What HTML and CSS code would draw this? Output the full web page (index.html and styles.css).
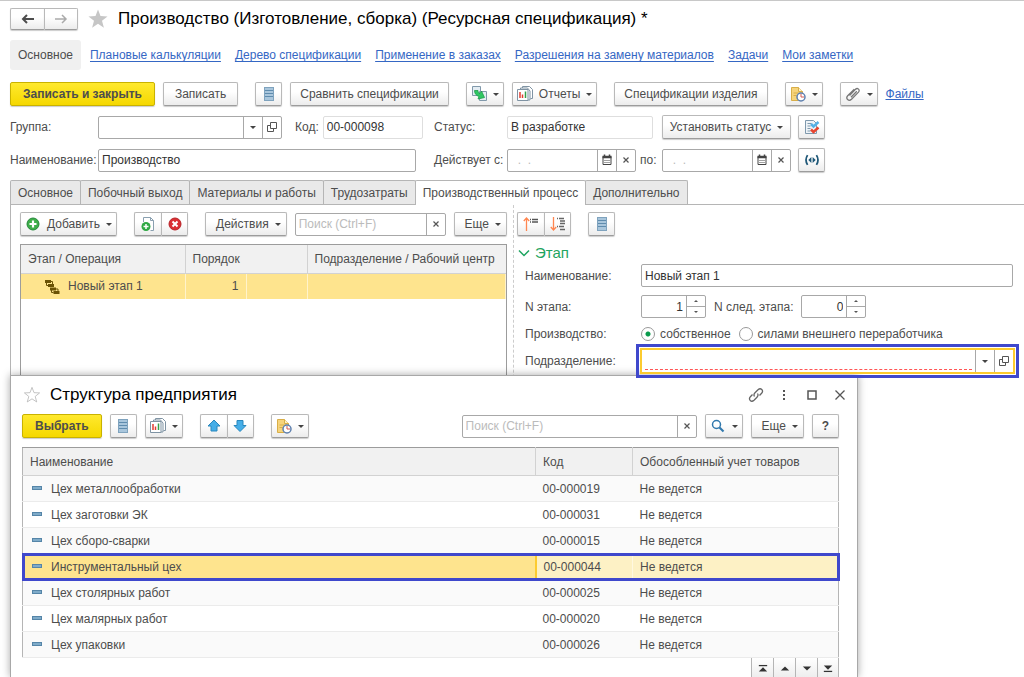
FILE: index.html
```html
<!DOCTYPE html>
<html lang="ru">
<head>
    <meta charset="UTF-8">
    <meta name="viewport" content="width=device-width, initial-scale=1.0">
    <link rel="stylesheet" href="styles.css">
    <title>Производство (Ресурсная спецификация)</title>
</head>
<body>
    <svg class="sprite" aria-hidden="true">
        <symbol id="i-list" viewBox="0 0 16 16">
            <rect x="3.5" y="1.5" width="9" height="13" fill="#a9c6dc" stroke="#7fa3be"/>
            <path d="M4 4.500h8M4 7.500h8M4 10.500h8" stroke="#5f8cae"/>
        </symbol>
        <symbol id="i-report" viewBox="0 0 16 16">
            <path d="M5.500 2.500V.5h7l3 3v9h-2" fill="#fff" stroke="#7f93a3"/>
            <path d="M3.500 3V2h7l2.500 3v9h-2" fill="#fff" stroke="#7f93a3"/>
            <path d="M.5 3.500h10.500v11H.5z" fill="#fff" stroke="#7f93a3"/>
            <path d="M3 6v6" stroke="#e23c32" stroke-width="1.500"/>
            <path d="M5.500 8.500V12" stroke="#e23c32" stroke-width="1.500"/>
            <path d="M8.500 5.500V12" stroke="#35a04a" stroke-width="1.500"/>
        </symbol>
        <symbol id="i-create" viewBox="0 0 16 16">
            <path d="M1.500.5h8v9h-8z" fill="#e4edf3" stroke="#8199ab"/>
            <path d="M8.500 5.500h7v9h-7z" fill="#e4edf3" stroke="#8199ab"/>
            <path d="M3.500 4.500H7c0 1.500.5 2.500 2 3l1.500-2.500 3 6.500-6.500 1.500 1-2.500C5 9.500 3.500 7.500 3.500 4.500z" fill="#2fc763" stroke="#1d9c48" stroke-width=".8"/>
        </symbol>
        <symbol id="i-doc-clock" viewBox="0 0 16 16">
            <path d="M1.500 1.500h7l4 4v9h-11z" fill="#f6d47c" stroke="#d8ae48"/>
            <path d="M8.500 1.500v4h4" fill="#fff2c6" stroke="#d8ae48"/>
            <path d="M3.500 7h5M3.500 9.500h3" stroke="#d8ae48"/>
            <circle cx="11" cy="11" r="4" fill="#fff" stroke="#5d7fae" stroke-width="1.500"/>
            <path d="M11 8v3h3" fill="none" stroke="#d35b50"/>
        </symbol>
        <symbol id="i-clip" viewBox="0 0 16 16">
            <path d="M4.500 9.500l6-6.200c2-2 5 .6 3 2.800l-7 7.200c-2.800 2.600-6.200-.8-3.800-3.500l6.600-6.600M6 11.200l5.800-6" fill="none" stroke="#777" stroke-width="1.300"/>
        </symbol>
        <symbol id="i-check-doc" viewBox="0 0 16 16">
            <path d="M1.500 1.500h8l3 3v10h-11z" fill="#eef3f7" stroke="#7f99ad"/>
            <path d="M3.500 4.500h4M3.500 7h3M3.500 9.500h3M3.500 12h3" stroke="#7f99ad"/>
            <path d="M7 5l2.500 2.500L14.500 3" fill="none" stroke="#55b1e6" stroke-width="2.500"/>
            <path d="M7 10.500l2.500 2.500 5-4.500" fill="none" stroke="#e8452f" stroke-width="2.500"/>
        </symbol>
        <symbol id="i-brackets" viewBox="0 0 18 16">
            <path d="M4 2.500Q.5 8 4 13.500M14 2.500Q17.500 8 14 13.500" fill="none" stroke="#1f5878" stroke-width="2"/>
            <path d="M8.300 4.500v7L4.800 8zM9.700 4.500v7L13.200 8z" fill="#1f5878"/>
        </symbol>
        <symbol id="i-open" viewBox="0 0 12 12">
            <path d="M4.500 1.500h6v6h-6z" fill="none" stroke="#555"/>
            <path d="M4 4.500H1.500v6h6V8" fill="none" stroke="#555"/>
        </symbol>
        <symbol id="i-calendar" viewBox="0 0 12 12">
            <path d="M2 2.500h8v8H2z" fill="none" stroke="#444"/>
            <path d="M1.500 3h9" stroke="#444" stroke-width="2.500"/>
            <path d="M3.500 .5v2M8.500 .5v2" stroke="#444" stroke-width="1.500"/>
            <path d="M3.500 6.500h5M3.500 8.500h5" stroke="#444" stroke-dasharray="1 1"/>
        </symbol>
        <symbol id="i-cross" viewBox="0 0 12 12">
            <path d="M3.500 3.500l5 5M8.500 3.500l-5 5" stroke="#555" stroke-width="1.200"/>
        </symbol>
        <symbol id="i-plus" viewBox="0 0 16 16">
            <circle cx="8" cy="8" r="6" fill="#3eae49" stroke="#25883a"/>
            <path d="M8 4.500v7M4.500 8h7" stroke="#fff" stroke-width="2.200"/>
        </symbol>
        <symbol id="i-doc-plus" viewBox="0 0 16 16">
            <path d="M3.500 6V1.500h7l3 3v10h-3" fill="#fff" stroke="#8aa0b0"/>
            <path d="M10.500 1.500v3h3" fill="none" stroke="#8aa0b0"/>
            <circle cx="6" cy="10.500" r="4.500" fill="#2fa844"/>
            <path d="M6 8v5M3.500 10.500h5" stroke="#fff" stroke-width="1.500"/>
        </symbol>
        <symbol id="i-delete" viewBox="0 0 16 16">
            <circle cx="8" cy="8" r="6" fill="#da2f33" stroke="#b82227"/>
            <path d="M5.500 5.500l5 5M10.500 5.500l-5 5" stroke="#fff" stroke-width="2"/>
        </symbol>
        <symbol id="i-sort-up" viewBox="0 0 16 16">
            <path d="M3.500 15V2M.8 5l2.700-3L6.200 5" fill="none" stroke="#ff8650" stroke-width="1.300"/>
            <path d="M7 3.500h1M7 6h1M9 3.500h6M9 6h6" stroke="#555" stroke-width="1.500"/>
        </symbol>
        <symbol id="i-sort-down" viewBox="0 0 16 16">
            <path d="M3.500 1v13M.8 11l2.700 3 2.700-3" fill="none" stroke="#ff8650" stroke-width="1.300"/>
            <path d="M7 2.500h1M9 2.500h5M10 5h5M10 7.500h5M7 10.500h1M9 10.500h5M10 13.500h5" stroke="#666" stroke-width="1.400"/>
        </symbol>
        <symbol id="i-stage" viewBox="0 0 16 16">
            <path d="M1 2.500h6M4 6.500h6M6 10h6M9.500 13.500h6" stroke="#6b5205" stroke-width="3"/>
            <path d="M2.500 3.500v3H4M7 2.500h1.500V5M12 10h2v2M7.500 11v2.500h2" fill="none" stroke="#6b5205"/>
        </symbol>
        <symbol id="i-arrow-up" viewBox="0 0 16 16">
            <path d="M8 2L14 8h-3v5H5V8H2z" fill="#45aee8" stroke="#2987bd"/>
        </symbol>
        <symbol id="i-arrow-down" viewBox="0 0 16 16">
            <path d="M8 13.500L14 7.500h-3v-5H5v5H2z" fill="#45aee8" stroke="#2987bd"/>
        </symbol>
        <symbol id="i-search" viewBox="0 0 16 16">
            <circle cx="6.500" cy="6.500" r="4" fill="none" stroke="#3179ad" stroke-width="1.500"/>
            <path d="M9.500 9.500L13.500 13.500" stroke="#3179ad" stroke-width="2.200"/>
        </symbol>
        <symbol id="i-back" viewBox="0 0 16 16">
            <path d="M14 8H3M7 4L3 8l4 4" fill="none" stroke="currentColor" stroke-width="2"/>
        </symbol>
        <symbol id="i-forward" viewBox="0 0 16 16">
            <path d="M2 8h11M9 4l4 4-4 4" fill="none" stroke="currentColor" stroke-width="1.500"/>
        </symbol>
        <symbol id="i-star" viewBox="0 0 20 20">
            <path d="M10 .5l2.500 6.600 7 .3-5.500 4.400 1.900 6.900L10 14.800l-5.900 3.900L6 11.800.5 7.400l7-.3z"/>
        </symbol>
        <symbol id="i-link" viewBox="0 0 16 16">
            <path d="M6.500 9.500c-1-1.500-.5-2.700.5-3.700l3-3c2.800-2.500 6 .6 3.600 3.500L11.500 8.500M9.500 6.500c1 1.500.5 2.700-.5 3.700l-3 3c-2.800 2.500-6-.6-3.600-3.500L4.500 7.500" fill="none" stroke="#666" stroke-width="1.300"/>
        </symbol>
    </svg>

    <div class="page">
        <header class="title-bar">
            <div class="btn-pair">
                <button class="btn btn-nav" aria-label="Назад"><svg class="icon"><use href="#i-back"/></svg></button>
                <button class="btn btn-nav btn-off" aria-label="Вперед"><svg class="icon"><use href="#i-forward"/></svg></button>
            </div>
            <svg class="star"><use href="#i-star"/></svg>
            <h1>Производство (Изготовление, сборка) (Ресурсная спецификация) *</h1>
        </header>

        <nav class="sections">
            <span class="current">Основное</span>
            <a href="#">Плановые калькуляции</a>
            <a href="#">Дерево спецификации</a>
            <a href="#">Применение в заказах</a>
            <a href="#">Разрешения на замену материалов</a>
            <a href="#">Задачи</a>
            <a href="#">Мои заметки</a>
        </nav>

        <div class="toolbar main-toolbar">
            <button class="btn btn-yellow">Записать и закрыть</button>
            <button class="btn btn-wide">Записать</button>
            <button class="btn btn-icon apart" aria-label="Список"><svg class="icon"><use href="#i-list"/></svg></button>
            <button class="btn">Сравнить спецификации</button>
            <button class="btn btn-menu apart" aria-label="Создать на основании"><svg class="icon"><use href="#i-create"/></svg><i class="caret"></i></button>
            <button class="btn btn-menu"><svg class="icon"><use href="#i-report"/></svg>Отчеты<i class="caret"></i></button>
            <button class="btn apart">Спецификации изделия</button>
            <button class="btn btn-menu apart" aria-label="История"><svg class="icon"><use href="#i-doc-clock"/></svg><i class="caret"></i></button>
            <button class="btn btn-menu apart" aria-label="Вложения"><svg class="icon"><use href="#i-clip"/></svg><i class="caret"></i></button>
            <a class="files" href="#">Файлы</a>
        </div>

        <div class="props">
            <label for="group">Группа:</label>
            <div class="cell">
                <div class="field field-group">
                    <input id="group" type="text">
                    <button aria-label="Выбрать из списка"><i class="caret"></i></button>
                    <button aria-label="Открыть"><svg class="icon-s"><use href="#i-open"/></svg></button>
                </div>
                <label class="code-label" for="code">Код:</label>
                <div class="field field-code field-pale"><input id="code" type="text" value="00-000098"></div>
            </div>
            <label for="status">Статус:</label>
            <div class="field field-pale"><input id="status" type="text" value="В разработке"></div>
            <div class="cell cell-last">
                <button class="btn btn-status">Установить статус<i class="caret"></i></button>
                <button class="btn btn-icon" aria-label="Проверить"><svg class="icon"><use href="#i-check-doc"/></svg></button>
            </div>

            <label for="name">Наименование:</label>
            <div class="field field-name"><input id="name" type="text" value="Производство"></div>
            <label for="from">Действует с:</label>
            <div class="cell">
                <div class="field field-date">
                    <input id="from" type="text" placeholder="  .  .">
                    <button aria-label="Календарь"><svg class="icon-s"><use href="#i-calendar"/></svg></button>
                    <button aria-label="Очистить"><svg class="icon-s"><use href="#i-cross"/></svg></button>
                </div>
                <label for="to">по:</label>
            </div>
            <div class="cell cell-last">
                <div class="field field-date">
                    <input id="to" type="text" placeholder="  .  .">
                    <button aria-label="Календарь"><svg class="icon-s"><use href="#i-calendar"/></svg></button>
                    <button aria-label="Очистить"><svg class="icon-s"><use href="#i-cross"/></svg></button>
                </div>
                <button class="btn btn-icon" aria-label="Период"><svg class="icon"><use href="#i-brackets"/></svg></button>
            </div>
        </div>

        <div class="tabs" role="tablist">
            <button role="tab">Основное</button>
            <button role="tab">Побочный выход</button>
            <button role="tab">Материалы и работы</button>
            <button role="tab">Трудозатраты</button>
            <button role="tab" class="active" aria-selected="true">Производственный процесс</button>
            <button role="tab">Дополнительно</button>
        </div>

        <main class="workspace">
            <section class="stages">
                <div class="toolbar">
                    <button class="btn btn-menu"><svg class="icon"><use href="#i-plus"/></svg>Добавить<i class="caret"></i></button>
                    <div class="btn-pair apart">
                        <button class="btn btn-icon" aria-label="Создать"><svg class="icon"><use href="#i-doc-plus"/></svg></button>
                        <button class="btn btn-icon" aria-label="Удалить"><svg class="icon"><use href="#i-delete"/></svg></button>
                    </div>
                    <button class="btn btn-text-menu apart">Действия<i class="caret"></i></button>
                    <div class="field search">
                        <input type="text" placeholder="Поиск (Ctrl+F)" aria-label="Поиск">
                        <button aria-label="Очистить"><svg class="icon-s"><use href="#i-cross"/></svg></button>
                    </div>
                    <button class="btn btn-text-menu">Еще<i class="caret"></i></button>
                </div>
                <div class="stage-box">
                    <table class="stage-table">
                        <colgroup><col class="c-stage"><col class="c-order"><col class="c-order"><col></colgroup>
                        <thead>
                            <tr><th>Этап / Операция</th><th colspan="2">Порядок</th><th>Подразделение / Рабочий центр</th></tr>
                        </thead>
                        <tbody>
                            <tr><td class="stage-name"><svg class="icon"><use href="#i-stage"/></svg>Новый этап 1</td><td class="num">1</td><td></td><td></td></tr>
                        </tbody>
                    </table>
                </div>
            </section>

            <section class="details">
                <div class="toolbar">
                    <div class="btn-pair">
                        <button class="btn btn-icon" aria-label="Выше"><svg class="icon"><use href="#i-sort-up"/></svg></button>
                        <button class="btn btn-icon" aria-label="Ниже"><svg class="icon"><use href="#i-sort-down"/></svg></button>
                    </div>
                    <button class="btn btn-icon apart" aria-label="Список"><svg class="icon"><use href="#i-list"/></svg></button>
                </div>
                <h2><svg class="chevron" viewBox="0 0 12 8"><path d="M1 1.500l5 5 5-5" fill="none" stroke="#1fa561" stroke-width="1.500"/></svg>Этап</h2>
                <div class="details-form">
                    <label for="stage">Наименование:</label>
                    <div class="field"><input id="stage" type="text" value="Новый этап 1"></div>

                    <label for="num">N этапа:</label>
                    <div class="cell">
                        <div class="field spin">
                            <input id="num" type="text" value="1">
                            <div class="steps"><button aria-label="Больше"></button><button aria-label="Меньше"></button></div>
                        </div>
                        <label for="next">N след. этапа:</label>
                        <div class="field spin">
                            <input id="next" type="text" value="0">
                            <div class="steps"><button aria-label="Больше"></button><button aria-label="Меньше"></button></div>
                        </div>
                    </div>

                    <span>Производство:</span>
                    <div class="cell radios">
                        <label><input type="radio" name="prod" checked>собственное</label>
                        <label><input type="radio" name="prod">силами внешнего переработчика</label>
                    </div>

                    <label for="dept">Подразделение:</label>
                    <div class="marked">
                        <div class="field field-active">
                            <div class="required"><input id="dept" type="text"></div>
                            <button aria-label="Выбрать из списка"><i class="caret"></i></button>
                            <button aria-label="Открыть"><svg class="icon-s"><use href="#i-open"/></svg></button>
                        </div>
                    </div>
                </div>
            </section>
        </main>

        <div class="dialog" role="dialog" aria-labelledby="dialog-title">
            <div class="dialog-head">
                <svg class="star-line"><use href="#i-star"/></svg>
                <h2 id="dialog-title">Структура предприятия</h2>
                <button aria-label="Ссылка"><svg class="icon"><use href="#i-link"/></svg></button>
                <button aria-label="Меню"><svg class="icon" viewBox="0 0 16 16"><path d="M7 3h2v2H7zM7 7h2v2H7zM7 11h2v2H7z" fill="#555"/></svg></button>
                <button aria-label="Развернуть"><svg class="icon" viewBox="0 0 16 16"><path d="M4 4h8v8H4z" fill="none" stroke="#555" stroke-width="1.500"/></svg></button>
                <button aria-label="Закрыть"><svg class="icon" viewBox="0 0 16 16"><path d="M3.500 3.500l9 9M12.500 3.500l-9 9" stroke="#555" stroke-width="1.300"/></svg></button>
            </div>
            <div class="toolbar">
                <button class="btn btn-yellow">Выбрать</button>
                <button class="btn btn-icon" aria-label="Список"><svg class="icon"><use href="#i-list"/></svg></button>
                <button class="btn btn-menu" aria-label="Отчеты"><svg class="icon"><use href="#i-report"/></svg><i class="caret"></i></button>
                <div class="btn-pair apart">
                    <button class="btn btn-icon" aria-label="Вверх"><svg class="icon"><use href="#i-arrow-up"/></svg></button>
                    <button class="btn btn-icon" aria-label="Вниз"><svg class="icon"><use href="#i-arrow-down"/></svg></button>
                </div>
                <button class="btn btn-menu apart" aria-label="История"><svg class="icon"><use href="#i-doc-clock"/></svg><i class="caret"></i></button>
                <div class="field search dialog-search">
                    <input type="text" placeholder="Поиск (Ctrl+F)" aria-label="Поиск">
                    <button aria-label="Очистить"><svg class="icon-s"><use href="#i-cross"/></svg></button>
                </div>
                <button class="btn btn-menu" aria-label="Найти"><svg class="icon"><use href="#i-search"/></svg><i class="caret"></i></button>
                <button class="btn btn-text-menu">Еще<i class="caret"></i></button>
                <button class="btn btn-icon btn-help">?</button>
            </div>
            <table class="dept-table">
                <colgroup><col><col class="c-code"><col class="c-account"></colgroup>
                <thead>
                    <tr><th>Наименование</th><th>Код</th><th>Обособленный учет товаров</th></tr>
                </thead>
                <tbody>
                    <tr><td>Цех металлообработки</td><td>00-000019</td><td>Не ведется</td></tr>
                    <tr><td>Цех заготовки ЭК</td><td>00-000031</td><td>Не ведется</td></tr>
                    <tr><td>Цех сборо-сварки</td><td>00-000015</td><td>Не ведется</td></tr>
                    <tr class="selected"><td>Инструментальный цех</td><td>00-000044</td><td>Не ведется</td></tr>
                    <tr><td>Цех столярных работ</td><td>00-000025</td><td>Не ведется</td></tr>
                    <tr><td>Цех малярных работ</td><td>00-000020</td><td>Не ведется</td></tr>
                    <tr><td>Цех упаковки</td><td>00-000026</td><td>Не ведется</td></tr>
                </tbody>
            </table>
            <div class="pager">
                <button aria-label="В начало"><svg viewBox="0 0 12 10"><path d="M1 1.500h10" stroke="#333" stroke-width="1.500"/><path d="M1 8.500l5-5 5 5z" fill="#333"/></svg></button>
                <button aria-label="Вверх"><svg viewBox="0 0 12 10"><path d="M1 7.500l5-5 5 5z" fill="#333"/></svg></button>
                <button aria-label="Вниз"><svg viewBox="0 0 12 10"><path d="M1 2.500l5 5 5-5z" fill="#333"/></svg></button>
                <button aria-label="В конец"><svg viewBox="0 0 12 10"><path d="M1 8.500h10" stroke="#333" stroke-width="1.500"/><path d="M1 1.500l5 5 5-5z" fill="#333"/></svg></button>
            </div>
        </div>
    </div>
</body>
</html>
```
FILE: styles.css
```css
* {
    box-sizing: border-box;
}

body {
    margin: 0;
    background-color: #fff;
    color: #4d4d4d;
    font-family: "Liberation Sans", Arial, sans-serif;
    font-size: 12px;
    line-height: 16px;
}

button,
input {
    font: inherit;
    color: inherit;
}

h1,
h2 {
    margin: 0;
    font-weight: 400;
}

a {
    color: #3567c4;
}

.sprite {
    display: none;
}

.page {
    position: relative;
    display: flex;
    flex-direction: column;
    height: 100vh;
    overflow: hidden;
    border-top: 1px solid #c8c8c8;
}

.icon {
    width: 16px;
    height: 16px;
    flex: none;
}

.icon-s {
    width: 12px;
    height: 12px;
    flex: none;
}

.caret {
    flex: none;
    border: 3px solid transparent;
    border-top-color: #444;
    border-bottom: 0;
}

/* Buttons */

.btn {
    display: flex;
    align-items: center;
    justify-content: center;
    height: 24px;
    padding: 0 9px;
    border: 1px solid #b9b9b9;
    border-bottom-color: #9c9c9c;
    border-radius: 2px;
    background: linear-gradient(#fff 40%, #ececec);
    box-shadow: 0 1px 1px #ccc;
    white-space: nowrap;
}

.btn-yellow {
    padding: 0 12px;
    border-color: #c9b200;
    background: linear-gradient(#ffe92e, #f5d800);
    font-weight: 700;
}

.btn-wide {
    padding: 0 11px;
}

.btn-icon {
    width: 27px;
    padding: 0;
}

.btn-menu {
    gap: 6px;
    padding: 0 4px;
}

.btn-text-menu {
    gap: 6px;
    padding: 0 5px 0 10px;
}

.btn-status {
    gap: 6px;
    width: 129px;
}

.btn-pair {
    display: flex;
}

.btn-pair .btn:first-child {
    border-right: 0;
    border-radius: 2px 0 0 2px;
}

.btn-pair .btn:last-child {
    border-radius: 0 2px 2px 0;
}

.toolbar {
    display: flex;
    align-items: center;
    gap: 8px;
}

.apart {
    margin-left: 9px;
}

/* Fields */

.field {
    display: flex;
    height: 23px;
    border: 1px solid #a8a8a8;
    border-radius: 2px;
    background-color: #fff;
}

.field input {
    flex: 1;
    min-width: 0;
    width: 100%;
    padding: 0 3px;
    border: 0;
    outline: 0;
    background: none;
    color: #333;
}

.field input::placeholder {
    color: #bbb;
    white-space: pre;
}

.field > button {
    display: flex;
    align-items: center;
    justify-content: center;
    width: 19px;
    padding: 0;
    border: 0;
    border-left: 1px solid #a8a8a8;
    background: none;
}

.field-pale {
    border-color: #dedede;
}

/* Title and sections */

.title-bar {
    display: flex;
    align-items: center;
    gap: 10px;
    padding: 7px 10px 10px;
}

.btn-nav {
    width: 34px;
    height: 22px;
    padding: 0;
}

.btn-off {
    color: #aaa;
}

.star {
    width: 20px;
    height: 20px;
    fill: #c6c6c6;
}

h1 {
    color: #000;
    font-size: 17px;
    line-height: 22px;
}

.sections {
    display: flex;
    align-items: center;
    gap: 14px;
    padding: 0 10px;
}

.sections a {
    text-underline-offset: 2px;
}

.current {
    margin-right: -5px;
    padding: 7px 8px;
    border-radius: 3px;
    background-color: #f0f0f0;
}

.main-toolbar {
    padding: 12px 10px 9px;
}

/* Item properties */

.props {
    display: grid;
    grid-template-columns: 88px 336px 73px 146px 1fr;
    row-gap: 9px;
    align-items: center;
    padding: 0 10px 8px;
}

.cell {
    display: flex;
    align-items: center;
    gap: 4px;
}

.cell-last {
    gap: 7px;
    padding-left: 9px;
}

.code-label {
    margin-left: 9px;
}

.field-name {
    width: 318px;
}

.field-group {
    width: 184px;
}

.field-code {
    width: 100px;
}

.field-date {
    flex: none;
    width: 129px;
}

/* Tabs */

.tabs {
    display: flex;
    margin-left: 10px;
    border-bottom: 1px solid #b5b5b5;
}

.tabs button {
    height: 24px;
    margin-right: -1px;
    padding: 0 7px;
    border: 1px solid #b5b5b5;
    border-bottom: 0;
    border-radius: 2px 2px 0 0;
    background-color: #e9e9e9;
}

.tabs .active {
    margin-bottom: -1px;
    height: 25px;
    background-color: #fff;
}

/* Stages */

.workspace {
    display: flex;
    flex: 1;
    min-height: 0;
    margin-left: 10px;
    padding-left: 9px;
    border-left: 1px solid #b5b5b5;
}

.stages {
    display: flex;
    flex-direction: column;
    width: 487px;
    padding-top: 7px;
}

.search {
    flex: 1;
}

.stage-box {
    flex: 1;
    margin-top: 8px;
    border: 1px solid #9c9c9c;
}

table {
    width: 100%;
    border-collapse: collapse;
    table-layout: fixed;
}

th {
    height: 28px;
    padding: 0 7px;
    border-right: 1px solid #d2d2d2;
    border-bottom: 1px solid #d2d2d2;
    background-color: #f1f1f1;
    font-weight: 400;
    text-align: left;
}

th:last-child {
    border-right: 0;
}

td {
    padding: 0 7px;
}

.c-stage {
    width: 164px;
}

.c-order {
    width: 61px;
}

.stage-table td {
    height: 26px;
    border-right: 1px solid #fff3cc;
    background-color: #fee48e;
}

.stage-name .icon {
    margin: 0 8px 0 16px;
    vertical-align: middle;
}

.num {
    text-align: right;
}

/* Stage details */

.details {
    flex: 1;
    margin-left: 6px;
    padding: 7px 11px 0 3px;
    border-left: 1px dashed #ccc;
}

.details h2 {
    display: flex;
    align-items: center;
    gap: 5px;
    padding: 8px 1px 0;
    color: #1fa561;
    font-size: 15px;
    line-height: 18px;
}

.chevron {
    width: 12px;
    height: 8px;
}

.details-form {
    display: grid;
    grid-template-columns: 116px 1fr;
    row-gap: 8px;
    align-items: center;
    padding: 2px 0 0 8px;
}

.details-form .cell {
    gap: 8px;
}

.spin {
    width: 65px;
}

.spin input {
    text-align: right;
}

.steps {
    display: flex;
    flex-direction: column;
    width: 19px;
    border-left: 1px solid #a8a8a8;
}

.steps button {
    display: flex;
    align-items: center;
    justify-content: center;
    flex: 1;
    padding: 0;
    border: 0;
    background: none;
}

.steps button + button {
    border-top: 1px solid #a8a8a8;
}

.steps button::before {
    content: "";
    border: 2px solid transparent;
    border-top: 0;
    border-bottom-color: #555;
}

.steps button + button::before {
    border-top: 2px solid #555;
    border-bottom: 0;
}

.radios label {
    display: flex;
    align-items: center;
    gap: 5px;
}

.radios input {
    appearance: none;
    width: 14px;
    height: 14px;
    margin: 0;
    border: 1px solid #999;
    border-radius: 50%;
}

.radios input:checked {
    background: radial-gradient(circle, #0a9a4c 2px, #fff 3px);
}

.marked {
    position: relative;
    z-index: 2;
    margin: -6px -6px -6px -5px;
    padding: 1px;
    border: 3px solid #3f48cc;
}

.field-active {
    height: 26px;
    border: 2px solid #fccb2f;
    border-radius: 0;
}

.required {
    display: flex;
    flex: 1;
    margin: 0 3px 2px;
    border-bottom: 1px dashed #f55;
}

/* Department dialog */

.dialog {
    position: absolute;
    top: 374px;
    bottom: 0;
    left: 10px;
    width: 848px;
    padding: 0 18px 0 11px;
    border: 1px solid #a8a8a8;
    border-bottom: 0;
    background-color: #fff;
    box-shadow: 0 0 8px rgba(0, 0, 0, 0.35);
}

.dialog-head {
    display: flex;
    align-items: center;
    gap: 10px;
    height: 38px;
    margin-right: -9px;
}

.dialog-head h2 {
    flex: 1;
    color: #000;
    font-size: 17px;
}

.dialog-head button {
    display: flex;
    padding: 0;
    margin-left: 2px;
    border: 0;
    background: none;
}

.star-line {
    width: 16px;
    height: 16px;
    margin-left: 2px;
    overflow: visible;
    fill: none;
    stroke: #b5b5b5;
}

.dialog-search {
    flex: none;
    width: 235px;
    margin-left: auto;
}

.btn-help {
    font-weight: 700;
}

.dept-table {
    margin-top: 9px;
    border: 1px solid #b5b5b5;
    border-top-color: #9c9c9c;
}

.c-code {
    width: 97px;
}

.c-account {
    width: 206px;
}

.dept-table td {
    height: 26px;
    border-bottom: 1px solid #ebebeb;
}

.dept-table tr:nth-child(odd) td {
    background-color: #fafafa;
}

.dept-table td:first-child::before {
    content: "";
    display: inline-block;
    width: 8px;
    height: 2px;
    margin: 0 9px 3px 2px;
    border: 1px solid #5585a8;
    background-color: #7fabc9;
    vertical-align: middle;
}

.dept-table .selected {
    outline: 3px solid #3f48cc;
    outline-offset: -2px;
}

.dept-table .selected td {
    border-right: 1px solid #fff8e0;
    background-color: #fdf1c5;
}

.dept-table .selected td:first-child {
    border-right: 2px solid #fccb2f;
    background-color: #fee48e;
}

.pager {
    display: flex;
    justify-content: flex-end;
}

.pager button {
    display: flex;
    align-items: center;
    justify-content: center;
    width: 22px;
    height: 22px;
    padding: 0;
    border: 1px solid #b5b5b5;
    border-top: 0;
    border-right: 0;
    background: linear-gradient(#fff, #ececec);
}

.pager button:last-child {
    border-right: 1px solid #b5b5b5;
}

.pager svg {
    width: 10px;
    height: 9px;
}
```
